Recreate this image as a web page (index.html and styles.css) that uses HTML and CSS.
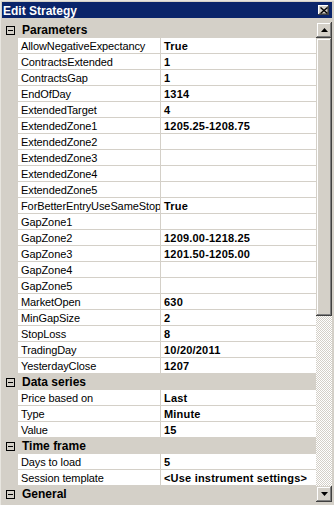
FILE: index.html
```html
<!DOCTYPE html>
<html>
<head>
<meta charset="utf-8">
<link rel="stylesheet" href="styles.css">
</head>
<body>
<div class="window">
  <div class="titlebar">
    <span class="title">Edit Strategy</span>
    <span class="close"><svg width="8" height="7" viewBox="0 0 8 7"><path d="M0.5 0.5 L7.5 6.5 M7.5 0.5 L0.5 6.5" stroke="#000" stroke-width="1.4" fill="none"/></svg></span>
  </div>
  <div class="content">
    <div class="grid">
      <div class="cat"><span class="toggle"></span><span class="cat-label">Parameters</span></div>
      <div class="row"><div class="name">AllowNegativeExpectancy</div><div class="value">True</div></div>
      <div class="row"><div class="name">ContractsExtended</div><div class="value">1</div></div>
      <div class="row"><div class="name">ContractsGap</div><div class="value">1</div></div>
      <div class="row"><div class="name">EndOfDay</div><div class="value">1314</div></div>
      <div class="row"><div class="name">ExtendedTarget</div><div class="value">4</div></div>
      <div class="row"><div class="name">ExtendedZone1</div><div class="value">1205.25-1208.75</div></div>
      <div class="row"><div class="name">ExtendedZone2</div><div class="value"></div></div>
      <div class="row"><div class="name">ExtendedZone3</div><div class="value"></div></div>
      <div class="row"><div class="name">ExtendedZone4</div><div class="value"></div></div>
      <div class="row"><div class="name">ExtendedZone5</div><div class="value"></div></div>
      <div class="row"><div class="name">ForBetterEntryUseSameStopL</div><div class="value">True</div></div>
      <div class="row"><div class="name">GapZone1</div><div class="value"></div></div>
      <div class="row"><div class="name">GapZone2</div><div class="value">1209.00-1218.25</div></div>
      <div class="row"><div class="name">GapZone3</div><div class="value">1201.50-1205.00</div></div>
      <div class="row"><div class="name">GapZone4</div><div class="value"></div></div>
      <div class="row"><div class="name">GapZone5</div><div class="value"></div></div>
      <div class="row"><div class="name">MarketOpen</div><div class="value">630</div></div>
      <div class="row"><div class="name">MinGapSize</div><div class="value">2</div></div>
      <div class="row"><div class="name">StopLoss</div><div class="value">8</div></div>
      <div class="row"><div class="name">TradingDay</div><div class="value">10/20/2011</div></div>
      <div class="row"><div class="name">YesterdayClose</div><div class="value">1207</div></div>
      <div class="cat"><span class="toggle"></span><span class="cat-label">Data series</span></div>
      <div class="row"><div class="name">Price based on</div><div class="value">Last</div></div>
      <div class="row"><div class="name">Type</div><div class="value">Minute</div></div>
      <div class="row"><div class="name">Value</div><div class="value">15</div></div>
      <div class="cat"><span class="toggle"></span><span class="cat-label">Time frame</span></div>
      <div class="row"><div class="name">Days to load</div><div class="value">5</div></div>
      <div class="row"><div class="name">Session template</div><div class="value">&lt;Use instrument settings&gt;</div></div>
      <div class="cat"><span class="toggle"></span><span class="cat-label">General</span></div>
    </div>
    <div class="scrollbar">
      <div class="sbtn"><svg width="7" height="4" viewBox="0 0 7 4"><path d="M3.5 0 L7 4 L0 4 Z" fill="#000"/></svg></div>
      <div class="thumb"></div>
      <div class="track"></div>
      <div class="sbtn"><svg width="7" height="4" viewBox="0 0 7 4"><path d="M0 0 L7 0 L3.5 4 Z" fill="#000"/></svg></div>
    </div>
  </div>
</div>
</body>
</html>
```

FILE: styles.css
```css
* { box-sizing: border-box; }
html, body { margin: 0; padding: 0; }
body {
  width: 334px;
  height: 505px;
  overflow: hidden;
  background: #d4d0c8;
  font-family: "Liberation Sans", Arial, sans-serif;
  font-size: 11px;
  color: #000;
}
.window {
  width: 334px;
  height: 505px;
  padding: 2px 2px 3px 2px;
  background: #d4d0c8;
  box-shadow: inset 1px 1px #e8e6e0;
  display: flex;
  flex-direction: column;
}
.titlebar {
  height: 16px;
  flex: none;
  background: #0a246a;
  display: flex;
  align-items: center;
  justify-content: space-between;
  padding: 0 2px 0 1px;
  margin-bottom: 4px;
}
.title {
  color: #fff;
  font-weight: bold;
  font-size: 12px;
  line-height: 16px;
  padding-top: 1px;
}
.close {
  width: 11px;
  height: 10px;
  background: #d4d0c8;
  box-shadow: inset -1px -1px #404040, inset 1px 1px #fff, inset -2px -2px #808080;
  display: flex;
  align-items: center;
  justify-content: center;
  margin-right: 1px;
}
.close svg { display: block; }
.content {
  flex: 1;
  display: flex;
  min-height: 0;
}
.grid {
  width: 314px;
  display: flex;
  flex-direction: column;
  overflow: hidden;
}
.row, .cat {
  height: 16px;
  flex: none;
  display: flex;
}
.row { padding-left: 16px; }
.name, .value {
  background: #fff;
  border-bottom: 1px solid #d4d0c8;
  padding-top: 1px;
  line-height: 14px;
  white-space: nowrap;
  overflow: hidden;
}
.name {
  width: 143px;
  padding-left: 3px;
  letter-spacing: -0.1px;
  border-right: 1px solid #d4d0c8;
}
.value {
  flex: 1;
  padding-left: 3px;
  font-weight: bold;
  letter-spacing: 0.2px;
}
.cat {
  align-items: flex-start;
  background: #d4d0c8;
}
.toggle {
  width: 9px;
  height: 9px;
  margin: 4px 0 0 4px;
  border: 1px solid #000;
  position: relative;
  flex: none;
}
.toggle::after {
  content: "";
  position: absolute;
  left: 1px;
  top: 3px;
  width: 5px;
  height: 1px;
  background: #000;
}
.cat-label {
  font-weight: bold;
  font-size: 12px;
  padding: 1px 0 0 7px;
  line-height: 14px;
}
.scrollbar {
  width: 16px;
  display: flex;
  flex-direction: column;
}
.sbtn {
  height: 16px;
  flex: none;
  background: #d4d0c8;
  box-shadow: inset -1px -1px #404040, inset 1px 1px #d4d0c8, inset -2px -2px #808080, inset 2px 2px #fff;
  display: flex;
  align-items: center;
  justify-content: center;
}
.sbtn svg { display: block; }
.thumb {
  height: 278px;
  flex: none;
  background: #d4d0c8;
  box-shadow: inset -1px -1px #404040, inset 1px 1px #d4d0c8, inset -2px -2px #808080, inset 2px 2px #fff;
}
.track {
  flex: 1;
  background-color: #d4d0c8;
  background-image: conic-gradient(#fff 25%, #d4d0c8 0 50%, #fff 0 75%, #d4d0c8 0);
  background-size: 2px 2px;
}
```
